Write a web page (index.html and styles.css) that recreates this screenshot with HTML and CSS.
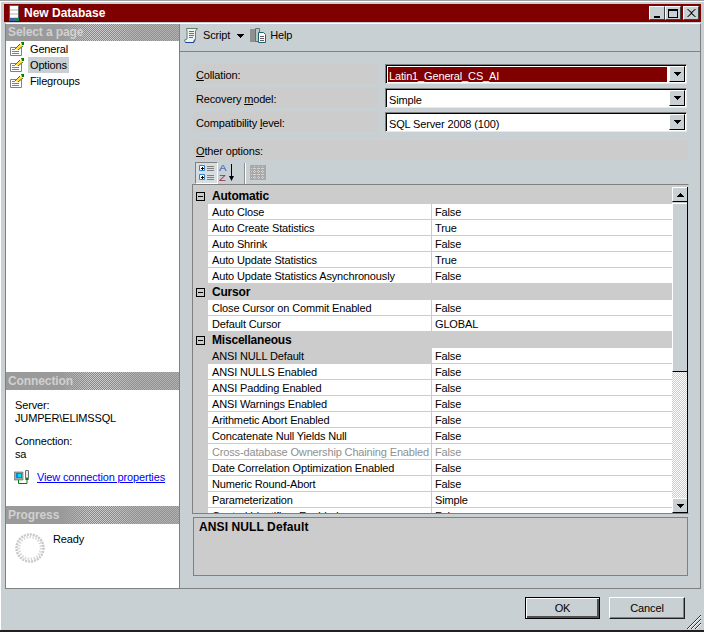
FILE: index.html
```html
<!DOCTYPE html>
<html>
<head>
<meta charset="utf-8">
<title>New Database</title>
<link rel="stylesheet" href="styles.css">
</head>
<body>
<svg class="defs" width="0" height="0">
  <defs>
    <g id="page-icon">
      <path d="M1.500 6.500h11v8h-11z" fill="#fff" stroke="#808080"/>
      <path d="M3 8.500h3M3 10.500h7M3 12.500h7" stroke="#808080"/>
      <path d="M6 8l5-5 3 2-5 4z" fill="#ffe040"/>
      <path d="M6 8l5-5M9 9l5-4" stroke="#606020" fill="none"/>
      <path d="M12 1h3v3h-2z" fill="#008000"/>
    </g>
    <g id="tri-down"><path d="M0 0h7v1H6v1H5v1H4v1H3V3H2V2H1V1H0z" fill="#000"/></g>
  </defs>
</svg>
<div class="window">
  <header class="titlebar">
    <svg class="app-icon" width="12" height="18" viewBox="0 0 12 18">
      <path d="M1.500 1.500h9v15h-9z" fill="#d8d8d8" stroke="#606060"/>
      <path d="M2 2h8v3H2z" fill="#fff"/>
      <path d="M2 7h8v2H2zM2 11h8v2H2z" fill="#fff"/>
      <path d="M7 14h4v3H7z" fill="#208060"/>
      <path d="M2 14h5v3H2z" fill="#4060a0"/>
    </svg>
    <span class="title-text">New Database</span>
    <div class="caption-buttons">
      <button class="cap-btn"><svg width="9" height="9" viewBox="0 0 9 9"><path d="M1 7h6v2H1z" fill="#000"/></svg></button>
      <button class="cap-btn"><svg width="10" height="9" viewBox="0 0 10 9"><path d="M0 0h10v9H0zM1 2v6h8V2z" fill="#000" fill-rule="evenodd"/></svg></button>
      <button class="cap-btn cap-close"><svg width="9" height="8" viewBox="0 0 9 8"><path d="M1 0l3.500 3L8 0l1 0-4 4 4 4H8L4.500 5 1 8H0l4-4-4-4z" fill="#000"/></svg></button>
    </div>
  </header>

  <div class="main">
    <aside class="sidebar">
      <div class="band band-first">Select a page</div>
      <ul class="pages">
        <li class="page"><svg class="pg" width="16" height="16"><use href="#page-icon"/></svg><span class="page-name">General</span></li>
        <li class="page"><svg class="pg" width="16" height="16"><use href="#page-icon"/></svg><span class="page-name page-on">Options</span></li>
        <li class="page"><svg class="pg" width="16" height="16"><use href="#page-icon"/></svg><span class="page-name">Filegroups</span></li>
      </ul>
      <div class="band">Connection</div>
      <div class="conn">
        <div class="conn-line">Server:</div>
        <div class="conn-line">JUMPER\ELIMSSQL</div>
        <div class="conn-line conn-second">Connection:</div>
        <div class="conn-line">sa</div>
        <div class="conn-link">
          <svg width="16" height="16" viewBox="0 0 16 16">
            <path d="M0 3h9v8H0z" fill="#a0a8a8" stroke="#606060" stroke-width=".6"/>
            <path d="M2 4h6v5H2z" fill="#1080f0"/>
            <path d="M4 5h3v3H4z" fill="#00e0f0"/>
            <path d="M11.500 1.500h3v8h-3z" fill="#e8e8e8" stroke="#707070"/>
            <path d="M4.500 11v3.500h8.500V10" fill="none" stroke="#008000"/>
            <path d="M11 11h4l-2-3z" fill="#008000"/>
          </svg>
          <a class="link" href="#">View connection properties</a>
        </div>
      </div>
      <div class="band">Progress</div>
      <div class="progress">
        <svg class="spin" width="32" height="32" viewBox="0 0 32 32">
          <circle cx="16" cy="16" r="13.500" fill="none" stroke="#c8c8c8" stroke-width="2.500" stroke-dasharray="2 1"/>
          <circle cx="16" cy="16" r="11" fill="none" stroke="#d8d8d8" stroke-width="2.500" stroke-dasharray="1.500 1.500"/>
        </svg>
        <span class="ready">Ready</span>
      </div>
    </aside>

    <section class="content">
      <div class="toolbar">
        <svg width="17" height="17" viewBox="0 0 17 17">
          <path d="M3.500 1.500h11l-2 2.500v8l-1.500 3.500H2.500l-1-2.500 2.500-1V4z" fill="#f0f4f0" stroke="#608070"/>
          <path d="M6 4.500h5M6 6.500h5M6 8.500h5M6 10.500h4" stroke="#707070"/>
          <path d="M2.500 15.500h8l1-3" fill="none" stroke="#2040a0"/>
        </svg>
        <span class="tb-label">Script</span>
        <svg class="tb-arrow" width="7" height="4" viewBox="0 0 7 4"><path d="M0 0h7v1H6v1H5v1H4v1H3V3H2V2H1V1H0z" fill="#000"/></svg>
        <svg class="tb-help" width="17" height="17" viewBox="0 0 17 17">
          <path d="M0 2h6v13H0z" fill="#909090"/>
          <path d="M5.500 1.500h4v13h-4z" fill="#b8c8c0" stroke="#607070"/>
          <path d="M8.500 5.500h5l2 2v8h-7z" fill="#fff" stroke="#206070"/>
          <path d="M10 9.500h4M10 11.500h4M10 13.500h4" stroke="#606060"/>
        </svg>
        <span class="tb-label">Help</span>
      </div>

      <div class="pane">
        <div class="form">
          <div class="field-label"><span><u>C</u>ollation:</span></div>
          <div class="combo">
            <div class="combo-value combo-selected">Latin1_General_CS_AI</div>
            <div class="combo-btn"><svg width="7" height="4"><use href="#tri-down"/></svg></div>
          </div>
          <div class="field-label"><span>Recovery <u>m</u>odel:</span></div>
          <div class="combo">
            <div class="combo-value">Simple</div>
            <div class="combo-btn"><svg width="7" height="4"><use href="#tri-down"/></svg></div>
          </div>
          <div class="field-label"><span>Compatibility <u>l</u>evel:</span></div>
          <div class="combo">
            <div class="combo-value">SQL Server 2008 (100)</div>
            <div class="combo-btn"><svg width="7" height="4"><use href="#tri-down"/></svg></div>
          </div>
        </div>

        <div class="other-label"><span><u>O</u>ther options:</span></div>

        <div class="grid-tools">
          <button class="gt-btn gt-on">
            <svg width="18" height="18" viewBox="0 0 18 18">
              <path d="M1.500 1.500h5v5h-5zM1.500 10.500h5v5h-5z" fill="#fff" stroke="#3080d0"/>
              <path d="M3 4.500h3M4.500 3v3M3 13.500h3M4.500 12v3" stroke="#000"/>
              <path d="M9 2.500h7M9 4.500h7M9 6.500h7M9 11.500h7M9 13.500h7M9 15.500h7" stroke="#808080"/>
            </svg>
          </button>
          <button class="gt-btn gt-sort">
            <svg width="18" height="19" viewBox="0 0 18 19">
              <text x="0" y="7" class="sort-a" transform="scale(1.250 1)">A</text>
              <text x="0" y="17.500" class="sort-z" transform="scale(1.250 1)">Z</text>
              <path d="M12.500 0v13" stroke="#000"/>
              <path d="M10 12h5l-2.500 5z" fill="#000"/>
            </svg>
          </button>
          <div class="gt-sep"></div>
          <button class="gt-btn gt-pages">
            <svg width="16" height="16" viewBox="0 0 16 16">
              <path d="M0 0h16v15H0z" fill="#a8a8a8"/>
              <path d="M1 3.500h14M1 6.500h14M1 9.500h14M1 12.500h14M4.500 1v13M8.500 1v13M12.500 1v13" stroke="#d4d4d4" stroke-dasharray="1 1"/>
            </svg>
          </button>
        </div>

        <div class="grid">
          <div class="grid-body">
            <div class="cat"><span class="expander"></span><span>Automatic</span></div>
            <div class="row"><div class="n">Auto Close</div><div class="v">False</div></div>
            <div class="row"><div class="n">Auto Create Statistics</div><div class="v">True</div></div>
            <div class="row"><div class="n">Auto Shrink</div><div class="v">False</div></div>
            <div class="row"><div class="n">Auto Update Statistics</div><div class="v">True</div></div>
            <div class="row"><div class="n">Auto Update Statistics Asynchronously</div><div class="v">False</div></div>
            <div class="cat"><span class="expander"></span><span>Cursor</span></div>
            <div class="row"><div class="n">Close Cursor on Commit Enabled</div><div class="v">False</div></div>
            <div class="row"><div class="n">Default Cursor</div><div class="v">GLOBAL</div></div>
            <div class="cat"><span class="expander"></span><span>Miscellaneous</span></div>
            <div class="row row-sel"><div class="n">ANSI NULL Default</div><div class="v">False</div></div>
            <div class="row"><div class="n">ANSI NULLS Enabled</div><div class="v">False</div></div>
            <div class="row"><div class="n">ANSI Padding Enabled</div><div class="v">False</div></div>
            <div class="row"><div class="n">ANSI Warnings Enabled</div><div class="v">False</div></div>
            <div class="row"><div class="n">Arithmetic Abort Enabled</div><div class="v">False</div></div>
            <div class="row"><div class="n">Concatenate Null Yields Null</div><div class="v">False</div></div>
            <div class="row row-off"><div class="n">Cross-database Ownership Chaining Enabled</div><div class="v">False</div></div>
            <div class="row"><div class="n">Date Correlation Optimization Enabled</div><div class="v">False</div></div>
            <div class="row"><div class="n">Numeric Round-Abort</div><div class="v">False</div></div>
            <div class="row"><div class="n">Parameterization</div><div class="v">Simple</div></div>
            <div class="row"><div class="n">Quoted Identifiers Enabled</div><div class="v">False</div></div>
          </div>
          <div class="scrollbar">
            <div class="sb-btn"><svg width="7" height="4"><use href="#tri-down" transform="matrix(1 0 0 -1 0 4)"/></svg></div>
            <div class="sb-thumb"></div>
            <div class="sb-track"></div>
            <div class="sb-btn"><svg width="7" height="4"><use href="#tri-down"/></svg></div>
          </div>
        </div>

        <div class="desc">ANSI NULL Default</div>
      </div>
    </section>
  </div>

  <footer class="footer">
    <button class="btn btn-default">OK</button>
    <button class="btn">Cancel</button>
    <svg class="grip" width="14" height="14" viewBox="0 0 14 14">
      <path d="M0 14L14 0M4 14L14 4M8 14l6-6" stroke="#303030" fill="none"/>
      <path d="M1 14L14 1M5 14L14 5M9 14l5-5" stroke="#fff" fill="none"/>
    </svg>
  </footer>
</div>
</body>
</html>
```

FILE: styles.css
```css
* { box-sizing: border-box; }
html, body { margin: 0; padding: 0; height: 100%; overflow: hidden; background: #c8d0d4; }
body { font: 11px/13px "Liberation Sans", Arial, sans-serif; letter-spacing: -.15px; color: #000; }
.defs { position: absolute; }
svg { display: block; }
button { font: inherit; letter-spacing: inherit; color: inherit; padding: 0; margin: 0; }

.window {
  width: 704px;
  height: 632px;
  display: flex;
  flex-direction: column;
  padding: 4px 3px 0 4px;
  border-top: 1px solid #a0a0a0;
  border-bottom: 2px solid #202020;
  box-shadow: inset 0 1px 0 #fff, inset 1px 0 0 #fff;
}

.titlebar {
  flex: none;
  height: 18px;
  margin-top: -1px;
  background: #800000;
  display: flex;
  align-items: center;
  padding: 0 2px 0 5px;
  color: #fff;
}
.app-icon { margin-right: 4px; margin-left: -1px; margin-top: -1px; }
.title-text { font-weight: bold; font-size: 12px; letter-spacing: 0; flex: 1; }
.caption-buttons { display: flex; gap: 0; }
.cap-btn {
  width: 16px;
  height: 14px;
  background: #c8d0d4;
  border: 1px solid;
  border-color: #fff #404040 #404040 #fff;
  display: flex;
  align-items: center;
  justify-content: center;
}
.cap-close { margin-left: 2px; }

.main {
  flex: none;
  height: 566px;
  margin: 1px 0 0 1px;
  display: flex;
  border: 1px solid #808080;
  border-top: 1px solid #fff;
}

.sidebar {
  width: 174px;
  flex: none;
  background: #fff;
  border-right: 1px solid #808080;
  display: flex;
  flex-direction: column;
}
.band {
  flex: none;
  height: 18px;
  padding: 1px 0 0 2px;
  line-height: 16px;
  font-weight: bold;
  font-size: 12px;
  letter-spacing: -.1px;
  color: #d0d0d0;
  background-color: #999;
  background-image:
    linear-gradient(90deg, #9a9a9a 0, #9a9a9a 32%, rgba(154,154,154,0) 48%, rgba(154,154,154,0) 58%, rgba(154,154,154,.5) 75%),
    conic-gradient(#888 25%, #ccc 0 50%, #888 0 75%, #ccc 0);
  background-size: 100% 100%, 2px 2px;
}
.band-first { height: 17px; padding-top: 0; }
.pages { list-style: none; margin: 0; padding: 0; flex: 1; }
.page { height: 16px; display: flex; align-items: center; padding-left: 3px; }
.pg { flex: none; }
.page-name { margin-left: 3px; padding: 1px 2px; height: 16px; line-height: 14px; }
.page-on { background: #c8d0d4; }

.conn { height: 116px; flex: none; padding: 9px 0 0 9px; }
.conn-line { height: 13px; }
.conn-second { margin-top: 10px; }
.conn-link { display: flex; align-items: center; gap: 7px; margin: 8px 0 0 -1px; }
.link { color: #0000ff; text-decoration: underline; }

.progress { height: 64px; flex: none; display: flex; padding: 8px 0 0 8px; }
.spin { margin-right: 7px; }
.ready { margin-top: 1px; }

.content { flex: 1; min-width: 0; display: flex; flex-direction: column; }
.toolbar {
  flex: none;
  height: 28px;
  border-bottom: 1px solid #808080;
  display: flex;
  align-items: center;
  padding: 0 0 4px 3px;
}
.tb-label { margin-left: 3px; }
.tb-arrow { margin-left: 7px; margin-top: 1px; }
.tb-help { margin-left: 6px; }

.pane { flex: 1; padding: 12px 0 0 13px; }
.form {
  display: grid;
  grid-template-columns: 185px 302px;
  column-gap: 7px;
  row-gap: 4px;
  grid-auto-rows: 20px;
}
.field-label, .other-label { background: #cccccc; display: flex; align-items: center; padding: 2px 0 0 3px; }
.combo {
  display: flex;
  align-items: stretch;
  background: #fff;
  border: 1px solid;
  border-color: #808080 #e8e8e8 #e8e8e8 #808080;
  box-shadow: inset 1px 1px 0 #000;
  padding: 1px;
  gap: 1px;
}
.combo-value { flex: 1; padding: 2px 1px 0 1px; line-height: 14px; margin: 1px 1px 0 1px; }
.combo-selected { background: #800000; color: #fff; outline: 1px solid #fff; }
.combo-btn {
  width: 16px;
  flex: none;
  background: #c8d0d4;
  border: 1px solid;
  border-color: #fff #000 #000 #fff;
  display: flex;
  align-items: center;
  justify-content: center;
}
.other-label { margin-top: 8px; height: 20px; width: 495px; }
.grid-tools { display: flex; align-items: center; height: 22px; margin-top: 2px; padding-left: 2px; }
.gt-btn { background: transparent; border: 0; display: flex; align-items: center; justify-content: center; }
.gt-on { width: 23px; height: 22px; background: #d8dee0; border: 1px solid; border-color: #808080 #fff #fff #808080; }
.gt-sort { width: 20px; height: 22px; }
.gt-sep { width: 2px; height: 21px; margin: 0 4px 0 6px; background: #fff; border-left: 1px solid #909090; }
.gt-pages { width: 16px; height: 16px; }
.sort-a { font: 9px "Liberation Sans", sans-serif; fill: #3050c0; }
.sort-z { font: 9px "Liberation Sans", sans-serif; fill: #a03040; }

.grid {
  height: 330px;
  margin-left: -1px;
  width: 497px;
  display: flex;
  border-top: 1px solid #808080;
  border-left: 1px solid #808080;
  border-bottom: 1px solid #808080;
  border-right: 1px solid #c8d0d4;
  background: #ccc;
  overflow: hidden;
}
.grid-body { flex: 1; min-width: 0; padding-top: 3px; overflow: hidden; }
.cat { height: 16px; display: flex; align-items: center; font-weight: bold; font-size: 12px; letter-spacing: -.2px; }
.expander {
  width: 9px;
  height: 9px;
  margin: 0 7px 0 3px;
  border: 1px solid #000;
  background: linear-gradient(#000, #000) center / 5px 1px no-repeat;
}
.row { height: 16px; display: flex; margin-left: 15px; background: #fff; border-bottom: 1px solid #ccc; }
.n { width: 224px; flex: none; padding: 2px 0 0 4px; border-right: 1px solid #ccc; white-space: nowrap; overflow: hidden; }
.v { flex: 1; padding: 2px 0 0 3px; }
.row-sel .n { background: #ccc; }
.row-off { color: #909090; }

.scrollbar { flex: none; margin-top: 2px; display: flex; flex-direction: column; border-right: 1px solid #000; width: 16px; }
.sb-btn {
  flex: none;
  height: 15px;
  background: #c8d0d4;
  border: 1px solid;
  border-color: #fff #000 #000 #fff;
  border-right: 0;
  display: flex;
  align-items: center;
  justify-content: center;
}
.sb-thumb { flex: none; height: 169px; margin-top: 1px; background: #c8d0d4; border-left: 1px solid #fff; border-top: 1px solid #fff; border-bottom: 1px solid #000; }
.sb-track { flex: 1; background: conic-gradient(#ccc 25%, #fff 0 50%, #ccc 0 75%, #fff 0) 0 0 / 2px 2px; }

.desc {
  margin-top: 3px;
  height: 59px;
  width: 495px;
  background: #ccc;
  border: 1px solid #808080;
  padding: 3px 0 0 5px;
  font-weight: bold;
  font-size: 12px;
  letter-spacing: .1px;
}

.footer {
  flex: 1;
  position: relative;
  display: flex;
  justify-content: flex-end;
  gap: 9px;
  padding: 8px 16px 0 0;
}
.btn {
  width: 76px;
  height: 22px;
  background: #c8d0d4;
  border: 1px solid;
  border-color: #fff #202020 #202020 #fff;
  box-shadow: inset -1px -1px 0 #808080;
}
.btn-default {
  width: 75px;
  border-color: #000;
  box-shadow: inset 1px 1px 0 #fff, inset -2px -2px 0 #505050;
}
.grip { position: absolute; right: 0; bottom: 1px; }
```
